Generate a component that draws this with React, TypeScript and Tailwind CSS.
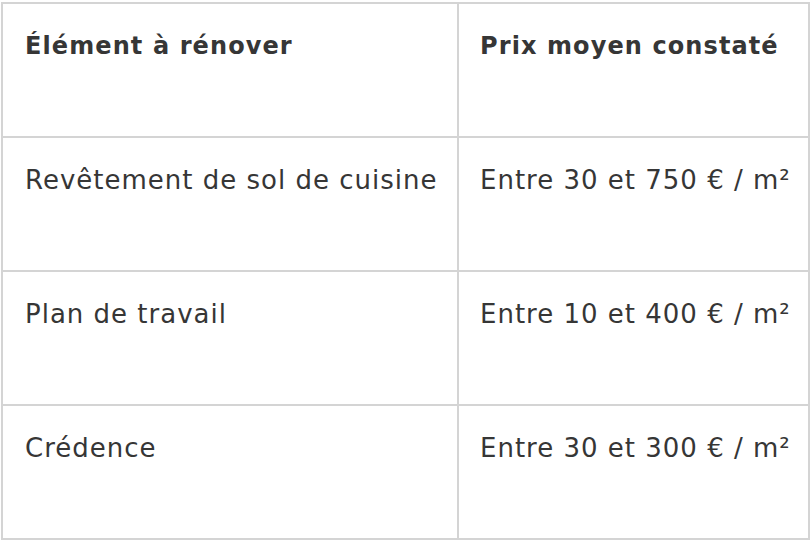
const rows = [
  ["Revêtement de sol de cuisine", "Entre 30 et 750 € / m²"],
  ["Plan de travail", "Entre 10 et 400 € / m²"],
  ["Crédence", "Entre 30 et 300 € / m²"],
];

export default function App() {
  return (
    <div className="bg-white w-[812px] h-[541px] pt-[2px] pl-[1px]" style={{ fontFamily: '"DejaVu Sans", sans-serif' }}>
      <table className="border-collapse w-[809px] text-[#363636] table-fixed">
        <colgroup>
          <col className="w-[456px]" />
          <col />
        </colgroup>
        <thead>
          <tr className="h-[134px]">
            <th className="border-2 border-[#d4d4d4] align-top text-left font-bold text-[24px] tracking-[1.1px] leading-[30px] pl-[22px] pt-[27px] whitespace-nowrap">
              Élément à rénover
            </th>
            <th className="border-2 border-[#d4d4d4] align-top text-left font-bold text-[24px] tracking-[1.1px] leading-[30px] pl-[21px] pt-[27px] whitespace-nowrap">
              Prix moyen constaté
            </th>
          </tr>
        </thead>
        <tbody>
          {rows.map(([a, b]) => (
            <tr key={a} className="h-[134px]">
              <td className="border-2 border-[#d4d4d4] align-top text-[26px] tracking-[1px] leading-[30px] pl-[22px] pt-[27px] whitespace-nowrap">{a}</td>
              <td className="border-2 border-[#d4d4d4] align-top text-[26px] tracking-[1px] leading-[30px] pl-[21px] pt-[27px] whitespace-nowrap">{b}</td>
            </tr>
          ))}
        </tbody>
      </table>
    </div>
  );
}
